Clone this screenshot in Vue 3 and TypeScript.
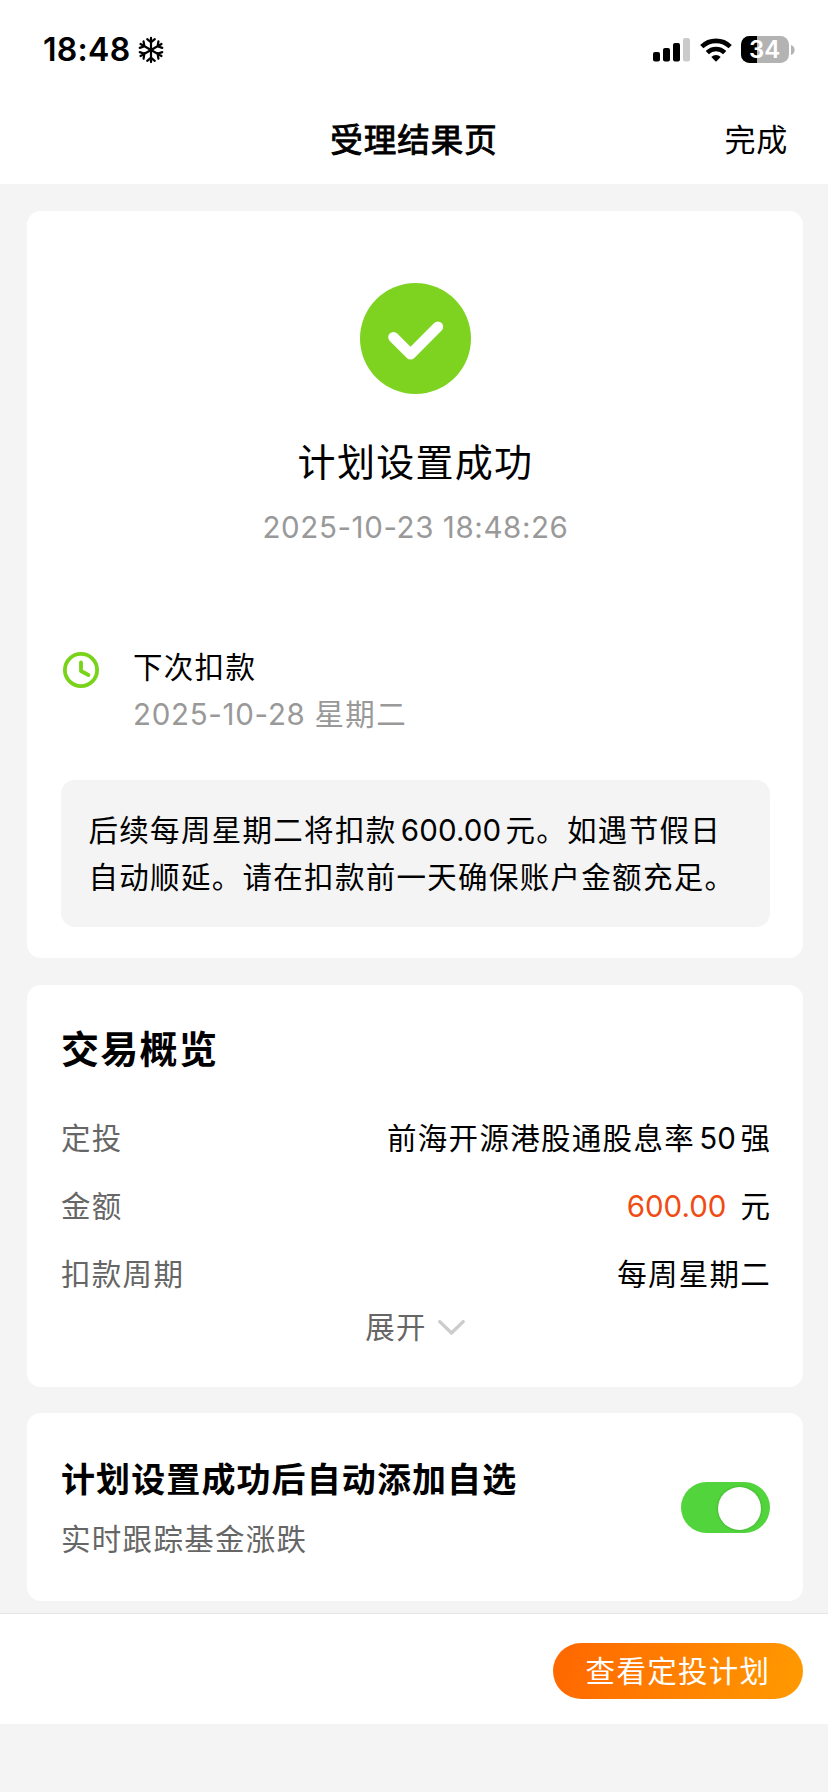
<script setup lang="ts">
import { ref } from 'vue'

interface OverviewRow {
  label: string
  parts: { text: string; kind: 'cjk' | 'num' | 'amount' | 'unit' }[]
}

const battery = 34
const autoFollow = ref(true)

const rows: OverviewRow[] = [
  {
    label: '定投',
    parts: [
      { text: '前海开源港股通股息率', kind: 'cjk' },
      { text: '50', kind: 'num' },
      { text: '强', kind: 'cjk' },
    ],
  },
  {
    label: '金额',
    parts: [
      { text: '600.00', kind: 'amount' },
      { text: '元', kind: 'unit' },
    ],
  },
  { label: '扣款周期', parts: [{ text: '每周星期二', kind: 'cjk' }] },
]

const flakeArms = [0, 60, 120, 180, 240, 300]
</script>

<template>
  <div class="page">
    <header class="top">
      <div class="status">
        <div class="status-left">
          <span class="time">18:48</span>
          <svg class="flake" width="26" height="28" viewBox="-13 -14 26 28">
            <g v-for="a in flakeArms" :key="a" :transform="`rotate(${a})`">
              <path d="M0 0V-12.1M-3.8-10.8L0-7.6L3.8-10.8" />
            </g>
          </svg>
        </div>
        <div class="status-right">
          <svg class="signal" width="38" height="24" viewBox="0 0 38 24">
            <rect x="0" y="14" width="7" height="9.4" rx="2" />
            <rect x="10" y="10" width="7" height="13.4" rx="2" />
            <rect x="20" y="5" width="7" height="18.4" rx="2" />
            <rect x="30" y="0" width="7" height="23.4" rx="2" fill="#cbcbcb" />
          </svg>
          <svg class="wifi" width="32" height="24" viewBox="0 0 32 24">
            <path d="M1.8 8.7A20.3 20.3 0 0 1 30.2 8.7" />
            <path d="M7.3 14.6A12.4 12.4 0 0 1 24.7 14.6" />
            <path class="dot" d="M16 23.8L11.3 19A6.8 6.8 0 0 1 20.7 19Z" />
          </svg>
          <div class="battery">
            <div class="battery-fill" :style="{ width: battery + '%' }"></div>
            <span class="battery-text">{{ battery }}</span>
          </div>
          <svg class="nub" width="4" height="10" viewBox="0 0 4 10">
            <path d="M0 0Q3.6 1.4 3.6 5Q3.6 8.6 0 10Z" />
          </svg>
        </div>
      </div>
      <nav class="nav">
        <h1 class="nav-title">受理结果页</h1>
        <a class="nav-done">完成</a>
      </nav>
    </header>

    <main class="content">
      <section class="card result">
        <svg class="check" width="111" height="111" viewBox="0 0 111 111">
          <circle cx="55.5" cy="55.5" r="55.5" />
          <path d="M33.5 54.2L50.6 71.2L77.9 43.8" />
        </svg>
        <h2 class="result-title">计划设置成功</h2>
        <p class="result-time">2025-10-23 18:48:26</p>
        <div class="next">
          <svg class="clock" width="36" height="36" viewBox="0 0 36 36">
            <circle cx="18" cy="18" r="16.1" />
            <path d="M18 10.4V19L25.4 23" />
          </svg>
          <div class="next-text">
            <div class="next-label">下次扣款</div>
            <div class="next-date"><span class="date-num">2025-10-28</span>星期二</div>
          </div>
        </div>
        <p class="note">
          后续每周星期二将扣款<span class="num">600.00</span>元。如遇节假日<br />自动顺延。请在扣款前一天确保账户金额充足。
        </p>
      </section>

      <section class="card overview">
        <h2 class="overview-title">交易概览</h2>
        <dl class="rows">
          <div v-for="row in rows" :key="row.label" class="row">
            <dt>{{ row.label }}</dt>
            <dd><span v-for="p in row.parts" :key="p.text" :class="p.kind">{{ p.text }}</span></dd>
          </div>
        </dl>
        <div class="expand">
          <span>展开</span>
          <svg width="29" height="20" viewBox="0 0 29 20">
            <path d="M2.7 4.6L14.5 16L26.2 4.6" />
          </svg>
        </div>
      </section>

      <section class="card follow">
        <div>
          <h3 class="follow-title">计划设置成功后自动添加自选</h3>
          <p class="follow-sub">实时跟踪基金涨跌</p>
        </div>
        <button
          class="switch"
          :class="{ on: autoFollow }"
          role="switch"
          :aria-checked="autoFollow"
          @click="autoFollow = !autoFollow"
        >
          <span class="knob"></span>
        </button>
      </section>
    </main>

    <footer class="bar">
      <button class="view">查看定投计划</button>
    </footer>
  </div>
</template>

<style>
body {
  margin: 0;
  background: #f4f4f4;
}
</style>

<style scoped>
.page {
  width: 828px;
  height: 1792px;
  overflow: hidden;
  background: #f4f4f4;
  color: #000;
  font-family: Inter, 'Noto Sans CJK SC', sans-serif;
  font-size: 29.5px;
  letter-spacing: 1.3px;
  line-height: 47px;
}
h1, h2, h3, p, dl, dd {
  margin: 0;
}
button {
  border: 0;
  padding: 0;
  font: inherit;
  letter-spacing: inherit;
}
svg {
  display: block;
  flex: none;
}
.top {
  height: 184px;
  background: #fff;
}
.status {
  display: flex;
  justify-content: space-between;
  align-items: center;
  height: 99px;
  padding: 0 33px 0 43px;
}
.status-left,
.status-right {
  display: flex;
  align-items: center;
}
.time {
  font-size: 32px;
  font-weight: 600;
  letter-spacing: 0.3px;
}
.flake {
  margin-left: 7px;
}
.flake path {
  fill: none;
  stroke: #000;
  stroke-width: 2.2;
  stroke-linecap: round;
}
.wifi {
  margin-left: 9px;
}
.wifi path {
  fill: none;
  stroke: #000;
  stroke-width: 4.6;
}
.wifi .dot {
  fill: #000;
  stroke: none;
}
.battery {
  position: relative;
  display: flex;
  align-items: center;
  justify-content: center;
  width: 48px;
  height: 27px;
  margin-left: 9px;
  border-radius: 8.5px;
  background: #b3b3b3;
  overflow: hidden;
}
.battery-fill {
  position: absolute;
  inset: 0 auto 0 0;
  background: #000;
}
.battery-text {
  position: relative;
  left: -0.5px;
  color: #fff;
  font-size: 24px;
  font-weight: 600;
  letter-spacing: -0.1px;
}
.nub {
  margin-left: 2px;
  fill: #b3b3b3;
}
.nav {
  display: grid;
  grid-template-columns: 1fr auto 1fr;
  align-items: center;
  height: 82px;
  padding: 0 40px;
}
.nav-title {
  grid-column: 2;
  font-size: 32.5px;
  font-weight: 400;
  letter-spacing: 1px;
  -webkit-text-stroke: 0.9px #000;
}
.nav-done {
  justify-self: end;
  margin-bottom: 1px;
  font-size: 31px;
  letter-spacing: 0.8px;
}
.content {
  display: flex;
  flex-direction: column;
  gap: 26.5px;
  padding: 27px 25px 0 27px;
}
.card {
  box-sizing: border-box;
  border-radius: 14px;
  background: #fff;
}
.result {
  display: flex;
  flex-direction: column;
  align-items: center;
  height: 747px;
  padding: 72px 33px 0 34px;
}
.check circle {
  fill: #7ed321;
}
.check path {
  fill: none;
  stroke: #fff;
  stroke-width: 10.6;
  stroke-linecap: round;
  stroke-linejoin: round;
}
.result-title {
  margin-top: 41px;
  font-size: 38px;
  font-weight: 400;
  line-height: 54px;
  letter-spacing: 1.3px;
}
.result-time {
  margin-top: 14px;
  color: #999;
  line-height: 48px;
  letter-spacing: 0.6px;
}
.next {
  display: flex;
  align-self: stretch;
  margin-top: 93px;
  padding-left: 2px;
}
.clock {
  margin-top: 8px;
}
.clock circle,
.clock path {
  fill: none;
  stroke: #78d31a;
  stroke-width: 3.8;
  stroke-linecap: round;
  stroke-linejoin: round;
}
.next-text {
  margin-left: 34px;
}
.next-date {
  color: #999;
}
.date-num {
  margin-right: 9px;
  letter-spacing: 0.7px;
}
.note {
  box-sizing: border-box;
  align-self: stretch;
  height: 147px;
  margin-top: 42px;
  padding: 27px 20px 0 27.5px;
  border-radius: 14px;
  background: #f4f4f4;
  white-space: nowrap;
}
.num {
  margin: 0 4.3px;
  letter-spacing: 0.1px;
}
.overview {
  height: 402px;
  padding: 36px 33px 0 34px;
}
.overview-title {
  font-size: 38px;
  font-weight: 700;
  line-height: 56px;
  letter-spacing: 1.3px;
}
.rows {
  display: flex;
  flex-direction: column;
  gap: 21px;
  margin-top: 38px;
}
.row {
  display: flex;
  justify-content: space-between;
}
dd {
  margin-right: -1.2px;
}
dt,
.expand,
.follow-sub {
  color: #666;
}
.amount {
  margin-right: 14px;
  color: #f04b12;
  letter-spacing: 0;
}
.expand {
  display: flex;
  align-items: center;
  justify-content: center;
  gap: 10px;
  margin-top: 6px;
}
.expand path {
  fill: none;
  stroke: #ccc;
  stroke-width: 3.4;
  stroke-linecap: round;
  stroke-linejoin: round;
}
.follow {
  display: flex;
  justify-content: space-between;
  align-items: center;
  height: 188px;
  padding: 1px 33px 0 34px;
}
.follow-title {
  font-size: 34px;
  font-weight: 700;
  line-height: 56px;
  letter-spacing: 1.1px;
}
.follow-sub {
  margin-top: 8px;
}
.switch {
  display: flex;
  align-items: center;
  box-sizing: border-box;
  width: 89px;
  height: 51px;
  padding: 1px 9px 0;
  border-radius: 26px;
  background: #ddd;
}
.switch.on {
  justify-content: flex-end;
  background: #52d53c;
}
.knob {
  width: 43px;
  height: 43px;
  border-radius: 50%;
  background: #fff;
  box-shadow: 0 0 3px rgba(0, 0, 0, 0.25);
}
.bar {
  display: flex;
  justify-content: flex-end;
  align-items: center;
  box-sizing: border-box;
  height: 111px;
  margin-top: 12px;
  padding: 3px 25px 0 0;
  border-top: 1px solid #e6e6e6;
  background: #fff;
}
.view {
  width: 250px;
  height: 56px;
  border-radius: 28px;
  background: linear-gradient(105deg, #ff6a00 8%, #ff9800 95%);
  color: #fff;
  line-height: 56px;
  text-align: center;
}
</style>
